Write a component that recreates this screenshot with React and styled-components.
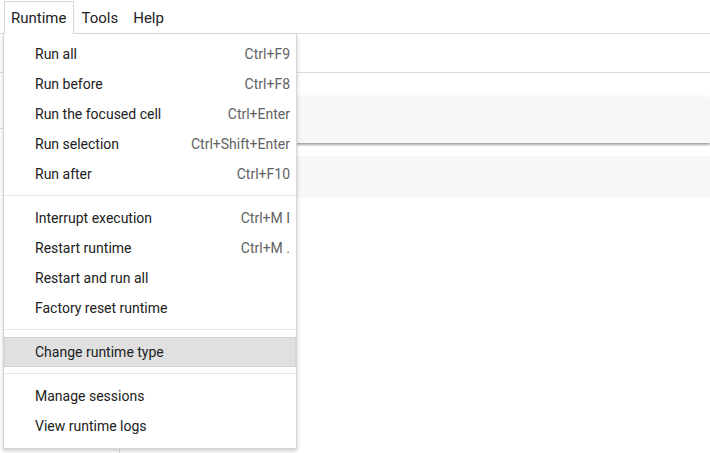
import React from 'react'
import styled, { createGlobalStyle } from 'styled-components'

const Global = createGlobalStyle`
  html, body {
    margin: 0;
    padding: 0;
    background: #fff;
    font-family: Roboto, "Noto Sans", sans-serif;
    overflow: hidden;
  }
`

const Page = styled.div`
  position: relative;
  width: 710px;
  height: 453px;
  overflow: hidden;
`

const MenuBar = styled.div`
  display: flex;
  align-items: flex-end;
  height: 34px;
  padding-left: 4px;
  border-bottom: 1px solid #dadce0;
  box-sizing: border-box;
`

const MenuTab = styled.div`
  height: 32px;
  padding: 0 7px 0 6px;
  display: flex;
  align-items: center;
  font-size: 15px;
  color: #212121;
  box-sizing: border-box;
  border: 1px solid ${p => (p.$open ? '#d6d6d6' : 'transparent')};
  border-bottom: none;
  background: ${p => (p.$open ? '#fff' : 'transparent')};
  margin-bottom: -1px;
  height: 33px;
  position: relative;
  z-index: 3;
`

const ToolBar = styled.div`
  height: 39px;
  border-bottom: 1px solid #dadce0;
  box-sizing: border-box;
`

const Body = styled.div`
  display: flex;
  height: 380px;
`

const Side = styled.div`
  width: 120px;
  border-right: 1px solid #dadce0;
  box-sizing: border-box;
`

const SideHead = styled.div`
  height: 55px;
  border-bottom: 1px solid #dadce0;
`

const Main = styled.div`
  flex: 1;
  padding-top: 26px;
  display: flex;
  flex-direction: column;
  gap: 13px;
`

const Cell = styled.div`
  height: ${p => (p.$focused ? 44 : 42)}px;
  background: #f7f7f7;
  ${p =>
    p.$focused &&
    `box-shadow: 0 -2px 5px rgba(0,0,0,0.06), 0 2px 2px rgba(0,0,0,0.35);`}
`

const Dropdown = styled.div`
  position: absolute;
  left: 3px;
  top: 34px;
  width: 294px;
  box-sizing: border-box;
  background: #fff;
  border: 1px solid #d6d6d6;
  border-top: none;
  box-shadow: 0 2px 4px rgba(0, 0, 0, 0.2);
  padding: 5px 0 7px;
  z-index: 2;
`

const Item = styled.div`
  height: 30px;
  display: flex;
  align-items: center;
  justify-content: space-between;
  padding: 0 6px 0 31px;
  font-size: 14px;
  color: #212121;
  box-sizing: border-box;
  background: ${p => (p.$active ? '#e0e0e0' : 'transparent')};
  ${p => p.$active && `outline: 1px dotted #c8c8c8; outline-offset: -1px;`}
`

const Shortcut = styled.span`
  color: #616161;
`

const Sep = styled.div`
  height: 1px;
  background: #e6e6e6;
  margin: 6px 0 7px;
`

const groups = [
  [
    ['Run all', 'Ctrl+F9'],
    ['Run before', 'Ctrl+F8'],
    ['Run the focused cell', 'Ctrl+Enter'],
    ['Run selection', 'Ctrl+Shift+Enter'],
    ['Run after', 'Ctrl+F10'],
  ],
  [
    ['Interrupt execution', 'Ctrl+M I'],
    ['Restart runtime', 'Ctrl+M .'],
    ['Restart and run all', ''],
    ['Factory reset runtime', ''],
  ],
  [['Change runtime type', '', true]],
  [
    ['Manage sessions', ''],
    ['View runtime logs', ''],
  ],
]

export default function App() {
  return (
    <Page>
      <Global />
      <MenuBar>
        <MenuTab $open>Runtime</MenuTab>
        <MenuTab>Tools</MenuTab>
        <MenuTab>Help</MenuTab>
      </MenuBar>
      <ToolBar />
      <Body>
        <Side>
          <SideHead />
        </Side>
        <Main>
          <Cell $focused />
          <Cell />
        </Main>
      </Body>
      <Dropdown>
        {groups.map((g, gi) => (
          <React.Fragment key={gi}>
            {gi > 0 && <Sep />}
            {g.map(([label, key, active]) => (
              <Item key={label} $active={active}>
                <span>{label}</span>
                <Shortcut>{key}</Shortcut>
              </Item>
            ))}
          </React.Fragment>
        ))}
      </Dropdown>
    </Page>
  )
}
